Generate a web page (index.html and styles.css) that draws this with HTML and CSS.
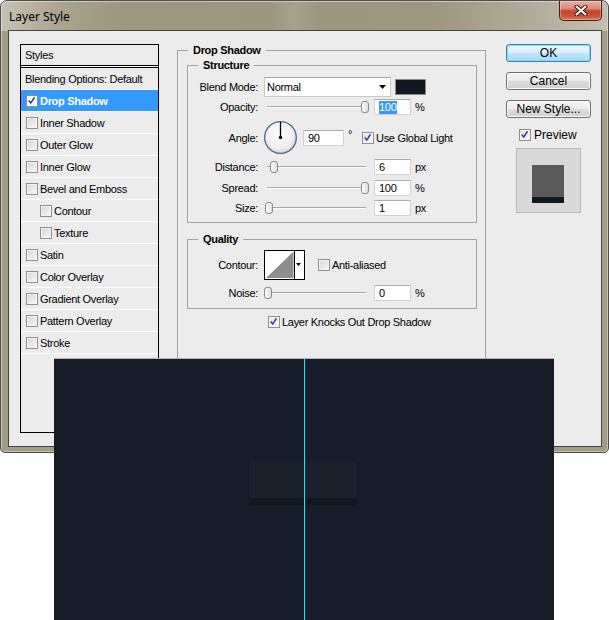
FILE: index.html
```html
<!DOCTYPE html>
<html>
<head>
<meta charset="utf-8">
<title>Layer Style</title>
<link rel="stylesheet" href="styles.css">
</head>
<body>
<div class="window">
  <div class="titlebar">
    <span class="title">Layer Style</span>
    <div class="close">
      <svg width="14" height="11" viewBox="0 0 14 11"><path d="M2.5 1.5 L11.5 9.5 M11.5 1.5 L2.5 9.5" stroke="#3b1510" stroke-width="4" stroke-linecap="round"/><path d="M2.5 1.5 L11.5 9.5 M11.5 1.5 L2.5 9.5" stroke="#fff" stroke-width="2" stroke-linecap="round"/></svg>
    </div>
  </div>
  <div class="client">
    <div class="panel">
      <div class="ph">Styles</div>
      <div class="row plain">Blending Options: Default</div>
      <div class="row sel"><span class="cb on white"><svg viewBox="0 0 12 12" width="10" height="10"><path d="M2 5.5 L4.5 8.5 L9 1.5" stroke="#2b3f94" stroke-width="1.8" fill="none"/></svg></span>Drop Shadow</div>
      <div class="row"><span class="cb"></span>Inner Shadow</div>
      <div class="row"><span class="cb"></span>Outer Glow</div>
      <div class="row"><span class="cb"></span>Inner Glow</div>
      <div class="row"><span class="cb"></span>Bevel and Emboss</div>
      <div class="row ind"><span class="cb"></span>Contour</div>
      <div class="row ind"><span class="cb"></span>Texture</div>
      <div class="row"><span class="cb"></span>Satin</div>
      <div class="row"><span class="cb"></span>Color Overlay</div>
      <div class="row"><span class="cb"></span>Gradient Overlay</div>
      <div class="row"><span class="cb"></span>Pattern Overlay</div>
      <div class="row"><span class="cb"></span>Stroke</div>
    </div>

    <fieldset class="group outer">
      <legend>Drop Shadow</legend>
      <fieldset class="group inner structure">
        <legend>Structure</legend>
        <div class="frow r-blend">
          <span class="lbl">Blend Mode:</span>
          <div class="select"><span>Normal</span><svg width="7" height="4" viewBox="0 0 7 4"><polygon points="0,0 7,0 3.5,4" fill="#000"/></svg></div>
          <span class="swatch"></span>
        </div>
        <div class="frow r-opacity">
          <span class="lbl">Opacity:</span>
          <div class="slider"><div class="track"></div><span class="thumb" style="left:97px"></span></div>
          <span class="field"><span class="hl">100</span></span>
          <span class="unit">%</span>
        </div>
        <div class="frow r-angle">
          <span class="lbl">Angle:</span>
          <svg class="dial" width="35" height="35" viewBox="0 0 35 35">
            <defs><radialGradient id="dg" cx="45%" cy="40%" r="62%"><stop offset="0" stop-color="#fdfdfd"/><stop offset="0.7" stop-color="#efefef"/><stop offset="1" stop-color="#d6d6d6"/></radialGradient></defs>
            <circle cx="17.5" cy="17.5" r="16.6" fill="#d7dbe3"/>
            <circle cx="17.5" cy="17.5" r="15.8" fill="url(#dg)" stroke="#4f6592" stroke-width="1.3"/>
            <line x1="17.5" y1="17.5" x2="17.5" y2="2" stroke="#000" stroke-width="1.3"/>
            <circle cx="17.5" cy="17.5" r="1.7" fill="#000"/>
          </svg>
          <span class="field wide">90</span>
          <span class="deg">°</span>
          <span class="cbl"><span class="cb on"><svg viewBox="0 0 12 12" width="10" height="10"><path d="M2 5.5 L4.5 8.5 L9 1.5" stroke="#2b3f94" stroke-width="1.8" fill="none"/></svg></span>Use Global Light</span>
        </div>
        <div class="frow r-dist">
          <span class="lbl">Distance:</span>
          <div class="slider"><div class="track"></div><span class="thumb" style="left:6px"></span></div>
          <span class="field">6</span>
          <span class="unit">px</span>
        </div>
        <div class="frow r-spread">
          <span class="lbl">Spread:</span>
          <div class="slider"><div class="track"></div><span class="thumb" style="left:97px"></span></div>
          <span class="field">100</span>
          <span class="unit">%</span>
        </div>
        <div class="frow r-size">
          <span class="lbl">Size:</span>
          <div class="slider"><div class="track"></div><span class="thumb" style="left:1px"></span></div>
          <span class="field">1</span>
          <span class="unit">px</span>
        </div>
      </fieldset>

      <fieldset class="group inner quality">
        <legend>Quality</legend>
        <div class="frow r-contour">
          <span class="lbl">Contour:</span>
          <svg class="contour" width="41" height="30" viewBox="0 0 41 30">
            <rect x="0.5" y="0.5" width="40" height="29" fill="#fff" stroke="#000"/>
            <polygon points="2,28 29.5,1.5 29.5,28" fill="#8e8e8e"/>
            <line x1="30.5" y1="1" x2="30.5" y2="29" stroke="#000"/>
            <polygon points="32,13 37,13 34.5,16" fill="#000"/>
          </svg>
          <span class="cbl aa"><span class="cb"></span>Anti-aliased</span>
        </div>
        <div class="frow r-noise">
          <span class="lbl">Noise:</span>
          <div class="slider"><div class="track"></div><span class="thumb" style="left:0px"></span></div>
          <span class="field">0</span>
          <span class="unit">%</span>
        </div>
      </fieldset>

      <div class="knock cbl"><span class="cb on"><svg viewBox="0 0 12 12" width="10" height="10"><path d="M2 5.5 L4.5 8.5 L9 1.5" stroke="#2b3f94" stroke-width="1.8" fill="none"/></svg></span>Layer Knocks Out Drop Shadow</div>
    </fieldset>

    <div class="side">
      <div class="btn ok">OK</div>
      <div class="btn">Cancel</div>
      <div class="btn">New Style...</div>
      <div class="cbl preview"><span class="cb on"><svg viewBox="0 0 12 12" width="10" height="10"><path d="M2 5.5 L4.5 8.5 L9 1.5" stroke="#2b3f94" stroke-width="1.8" fill="none"/></svg></span>Preview</div>
      <div class="pbox"><div class="pshape"></div></div>
    </div>
  </div>
</div>

<div class="canvas">
  <div class="shape"></div>
  <div class="guide"></div>
</div>
</body>
</html>
```

FILE: styles.css
```css
* { box-sizing: border-box; }

html, body { margin: 0; padding: 0; }

body {
  position: relative;
  width: 609px;
  height: 620px;
  overflow: hidden;
  background: #ffffff;
  font-family: "Liberation Sans", Arial, sans-serif;
  font-size: 11px;
  letter-spacing: -0.3px;
  color: #000;
}

.window {
  width: 609px;
  height: 453px;
  border: 1px solid #4e4e4e;
  border-radius: 7px 7px 5px 5px;
  padding: 0 6px 5px 7px;
  background:
    linear-gradient(90deg, #c6c1b2 0, #aca691 55px, #9e9882 110px, #9c9680 270px, #a5a38f 293px, #9c9680 318px, #9d9781 430px, #aea996 515px, #c3beaf 605px) top left / 100% 30px no-repeat,
    #a39d87;
  box-shadow: inset 1px 1px 0 rgba(255,255,255,0.45), inset -1px -1px 0 rgba(255,255,255,0.35);
}

.titlebar {
  height: 29px;
  display: flex;
  justify-content: space-between;
  align-items: flex-start;
}

.title {
  margin: 8px 0 0 1px;
  font-family: "Noto Sans", "Liberation Sans", sans-serif;
  font-size: 12px;
  line-height: 16px;
  letter-spacing: 0;
  color: #000;
}

.close {
  width: 43px;
  height: 20px;
  border: 1px solid #4d1a14;
  border-top: none;
  border-radius: 0 0 5px 5px;
  background: linear-gradient(#eab0a2 0%, #d98a77 40%, #c4462e 52%, #c9553b 80%, #d97a5c 100%);
  box-shadow: inset 0 0 0 1px rgba(255,255,255,0.3);
  display: flex;
  align-items: center;
  justify-content: center;
}

.client {
  display: flex;
  align-items: flex-start;
  height: 417px;
  border: 1px solid #444;
  background: #ececec;
}

/* Styles list */
.panel {
  margin: 13px 0 0 11px;
  width: 139px;
  height: 389px;
  border: 1px solid #000;
  flex: none;
}

.ph {
  height: 21px;
  padding-left: 4px;
  display: flex;
  align-items: center;
  border-bottom: 1px solid #000;
  box-shadow: 0 1px 0 #fff, 0 2px 0 #000;
  margin-bottom: 2px;
}

.row {
  height: 22px;
  border-bottom: 1px solid #fff;
  display: flex;
  align-items: center;
  gap: 2px;
  padding-left: 5px;
}
.row.plain { padding-left: 4px; }
.row.ind { padding-left: 19px; }
.row.sel {
  background: #3399ff;
  color: #fff;
  font-weight: bold;
}

/* checkbox */
.cb {
  width: 12px;
  height: 12px;
  flex: none;
  border: 1px solid #8e8f8f;
  background: linear-gradient(135deg, #d3d5d9 0%, #eeeeee 70%, #f8f8f8 100%);
  box-shadow: inset 0 0 0 1px #f4f4f4;
  display: flex;
  align-items: center;
  justify-content: center;
}
.cb.on { background: linear-gradient(135deg, #e4e6ea, #fbfbfb); }
.cb.white { background: #fff; border-color: #8e8f8f; }
.cb svg { display: block; }

.cbl {
  display: flex;
  align-items: center;
  gap: 2px;
}

/* group boxes */
.group {
  margin: 0;
  padding: 0;
  min-inline-size: 0;
  border: 1px solid #a2a2a2;
}
.group legend {
  padding: 0 5px;
  margin-left: 10px;
  font-weight: bold;
  line-height: 13px;
}

.outer {
  margin: 13px 0 0 18px;
  width: 309px;
  height: 389px;
  flex: none;
}

.inner {
  width: 290px;
  margin-left: 9px;
}
.structure { margin-top: 2px; padding-bottom: 6px; }
.quality { margin-top: 10px; padding-bottom: 7px; }

.frow {
  display: flex;
  align-items: center;
  height: 16px;
}
.lbl {
  width: 70px;
  margin-right: 6px;
  text-align: right;
  flex: none;
}

.r-blend { margin-top: 5px; height: 20px; }
.r-opacity { margin-top: 2px; }
.r-angle { margin-top: 5px; height: 35px; }
.r-dist { margin-top: 4px; }
.r-spread { margin-top: 5px; }
.r-size { margin-top: 4px; }
.r-contour { margin-top: 4px; height: 30px; }
.r-noise { margin-top: 5px; }

.select {
  width: 127px;
  height: 20px;
  background: #fff;
  border: 1px solid #c9c9c9;
  border-top-color: #a9a9a9;
  display: flex;
  align-items: center;
  justify-content: space-between;
  padding: 0 4px 0 2px;
}
.select svg { display: block; }

.swatch {
  width: 31px;
  height: 16px;
  margin-left: 4px;
  background: #111820;
  border: 1px solid #8c8c8c;
}

.slider {
  position: relative;
  width: 105px;
  height: 16px;
  margin-right: 5px;
  padding: 0 3px;
  display: flex;
  align-items: center;
  flex: none;
}
.track {
  flex: 1;
  height: 2px;
  border-top: 1px solid #a6a6a6;
  background: #fdfdfd;
}
.thumb {
  position: absolute;
  top: 2px;
  width: 8px;
  height: 12px;
  border: 1px solid #8a8a8a;
  border-radius: 3px;
  background: linear-gradient(90deg, #fdfdfd, #dcdcdc);
}

.field {
  width: 37px;
  height: 16px;
  background: #fff;
  border: 1px solid #cfd3d8;
  border-top-color: #a9adb3;
  padding-left: 4px;
  display: flex;
  align-items: center;
  flex: none;
}
.field.wide { width: 41px; }
.hl {
  background: #3399ff;
  color: #fff;
  line-height: 13px;
  padding-right: 1px;
}
.unit { margin-left: 4px; }

.dial { display: block; margin-left: -1px; margin-right: 5px; flex: none; }
.deg {
  width: 18px;
  padding-left: 4px;
  align-self: flex-start;
  margin-top: 8px;
  flex: none;
}

.contour { display: block; flex: none; }
.aa { margin-left: 13px; }

.knock {
  margin-top: 5px;
  height: 16px;
  padding-left: 90px;
}

/* right column */
.side {
  margin: 13px 0 0 20px;
  width: 85px;
  flex: none;
}
.btn {
  height: 18px;
  margin-bottom: 10px;
  border: 1px solid #707070;
  border-radius: 3px;
  background: linear-gradient(#f3f3f3 0%, #ebebeb 48%, #dddddd 52%, #cfcfcf 100%);
  box-shadow: inset 0 0 0 1px #fbfbfb;
  display: flex;
  align-items: center;
  justify-content: center;
  font-size: 12px;
  letter-spacing: 0;
}
.btn.ok {
  border-color: #3c7fb1;
  background: linear-gradient(#eaf6fd 0%, #d9f0fc 48%, #bee6fd 52%, #a7d9f5 100%);
  box-shadow: inset 0 0 0 1px #7fdcfb;
}
.preview {
  margin-left: 13px;
  height: 13px;
  gap: 3px;
  font-size: 12px;
  letter-spacing: 0;
}
.pbox {
  margin: 7px 0 0 10px;
  width: 65px;
  height: 65px;
  background: #d9d9d9;
  border: 1px solid #b8b8b8;
}
.pshape {
  margin: 16px 0 0 15px;
  width: 32px;
  height: 38px;
  background: #5a5a5a;
  border-bottom: 6px solid #111820;
}

/* overlay canvas */
.canvas {
  position: absolute;
  left: 54px;
  top: 358px;
  width: 500px;
  height: 262px;
  background: #161d28;
  border-top: 1px solid #b5b5b5;
}
.shape {
  margin: 102px 0 0 195px;
  width: 108px;
  height: 44px;
  background: #1b212b;
  border-bottom: 7px solid #11171f;
  border-radius: 3px;
  box-shadow: 0 0 0 1px #151b24;
}
.guide {
  position: absolute;
  left: 250px;
  top: 0;
  bottom: 0;
  width: 1px;
  background: #19eaff;
}
```
